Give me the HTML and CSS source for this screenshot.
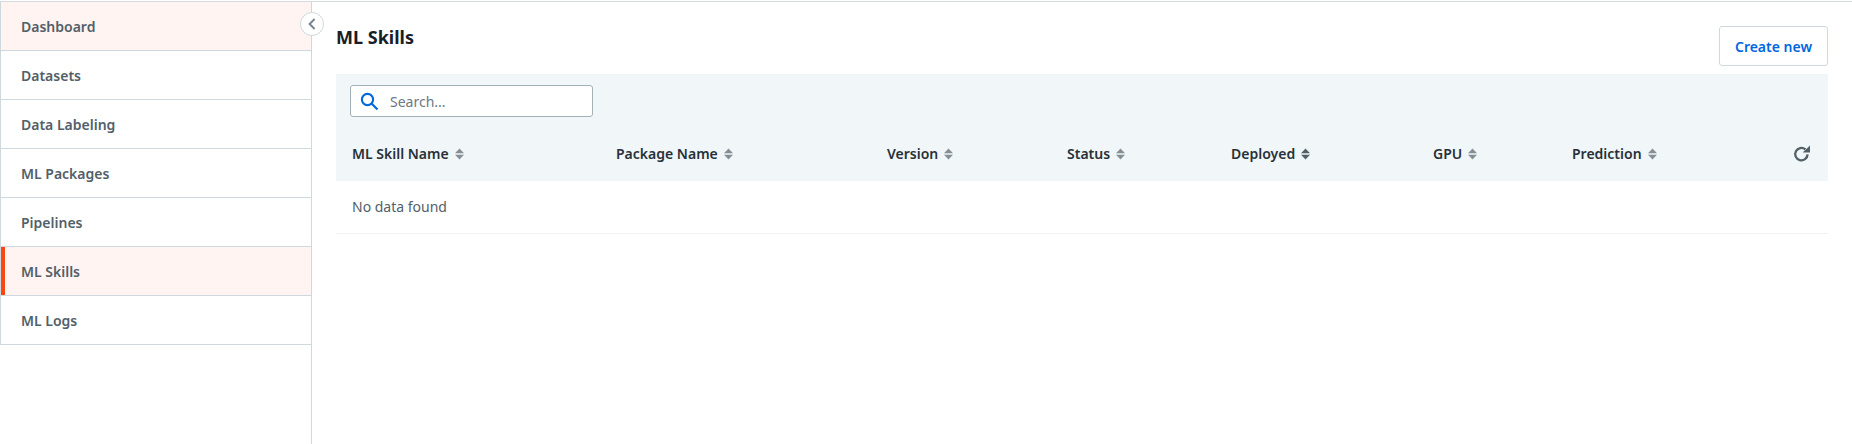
FILE: index.html
```html
<!DOCTYPE html>
<html lang="en">
<head>
<meta charset="utf-8">
<title>ML Skills</title>
<link rel="stylesheet" href="styles.css">
</head>
<body>
<div class="app">
  <aside class="sidebar">
    <nav class="nav">
      <a class="nav-item nav-hover">Dashboard</a>
      <a class="nav-item">Datasets</a>
      <a class="nav-item">Data Labeling</a>
      <a class="nav-item">ML Packages</a>
      <a class="nav-item">Pipelines</a>
      <a class="nav-item nav-active">ML Skills</a>
      <a class="nav-item">ML Logs</a>
    </nav>
    <button class="collapse" aria-label="Collapse">
      <svg width="14" height="14" viewBox="0 0 14 14"><path d="M9.6 2 4.6 7l5 5" fill="none" stroke="#7b8790" stroke-width="2"/></svg>
    </button>
  </aside>
  <main class="main">
    <header class="head">
      <h1 class="title">ML Skills</h1>
      <button class="create">Create new</button>
    </header>
    <section class="table">
      <div class="toolbar">
        <div class="search">
          <svg class="search-icon" width="19" height="19" viewBox="0 0 19 19"><circle cx="7.5" cy="7.5" r="5.6" fill="none" stroke="#0067df" stroke-width="2.1"/><path d="M11.5 11.5l6 6" stroke="#0067df" stroke-width="2.1" fill="none"/></svg>
          <span class="placeholder">Search...</span>
        </div>
      </div>
      <div class="thead">
        <div class="th w1">ML Skill Name<svg class="sort" width="9" height="12" viewBox="0 0 9 12"><path d="M4.5 .6 9 5.2H0zM4.5 11.4 0 6.8h9z" fill="#858f95"/></svg></div>
        <div class="th w2">Package Name<svg class="sort" width="9" height="12" viewBox="0 0 9 12"><path d="M4.5 .6 9 5.2H0zM4.5 11.4 0 6.8h9z" fill="#858f95"/></svg></div>
        <div class="th w3">Version<svg class="sort" width="9" height="12" viewBox="0 0 9 12"><path d="M4.5 .6 9 5.2H0zM4.5 11.4 0 6.8h9z" fill="#858f95"/></svg></div>
        <div class="th w4">Status<svg class="sort" width="9" height="12" viewBox="0 0 9 12"><path d="M4.5 .6 9 5.2H0zM4.5 11.4 0 6.8h9z" fill="#858f95"/></svg></div>
        <div class="th w5">Deployed<svg class="sort" width="9" height="12" viewBox="0 0 9 12"><path d="M4.5 .6 9 5.2H0zM4.5 11.4 0 6.8h9z" fill="#526069"/></svg></div>
        <div class="th w6">GPU<svg class="sort" width="9" height="12" viewBox="0 0 9 12"><path d="M4.5 .6 9 5.2H0zM4.5 11.4 0 6.8h9z" fill="#858f95"/></svg></div>
        <div class="th w7">Prediction<svg class="sort" width="9" height="12" viewBox="0 0 9 12"><path d="M4.5 .6 9 5.2H0zM4.5 11.4 0 6.8h9z" fill="#858f95"/></svg></div>
        <svg class="refresh" width="18" height="18" viewBox="0 0 18 18"><path d="M14.6 9.4A6.2 6.2 0 1 1 12.4 4.4" fill="none" stroke="#526069" stroke-width="2.3"/><path d="M9.6 7.6H17V.6z" fill="#526069"/></svg>
      </div>
      <div class="empty">No data found</div>
    </section>
  </main>
</div>
</body>
</html>
```
FILE: styles.css
```css
* { box-sizing: border-box; }
html, body { margin: 0; height: 100%; background: #fff; }
body { font-family: "Noto Sans", sans-serif; overflow: hidden; }
.app { display: flex; height: 444px; border-top: 1px solid #d5dbdf; margin-top: 1px; }
.sidebar { position: relative; flex: 0 0 312px; border-right: 1px solid #cfd8dd; }
.nav { display: flex; flex-direction: column; }
.nav-item {
  height: 49px; display: flex; align-items: center; padding-left: 20px;
  font-size: 14px; font-weight: 600; color: #526069;
  border-left: 1px solid #cfd8dd; border-bottom: 1px solid #cfd8dd;
}
.nav-hover { background: #fff4f1; }
.nav-active { background: #fff4f1; box-shadow: inset 4px 0 0 #fa4616; }
.collapse {
  position: absolute; top: 10px; right: -13px; width: 24px; height: 24px; padding: 0;
  display: flex; align-items: center; justify-content: center;
  border: 1px solid #cfd8dd; border-radius: 50%; background: #fff;
}
.main { flex: 1; padding: 0 24px; min-width: 0; }
.head { display: flex; justify-content: space-between; align-items: flex-start; height: 72px; }
.title { margin: 23px 0 0; font-size: 18px; line-height: 24px; font-weight: 700; color: #182027; }
.create {
  margin-top: 24px; width: 109px; height: 40px; background: #fff;
  border: 1px solid #cfd8dd; border-radius: 3px; color: #0067df;
  font: 600 14px "Noto Sans", sans-serif;
}
.table { display: flex; flex-direction: column; }
.toolbar { background: #f1f6f8; padding: 11px 14px 0; height: 54px; }
.search {
  display: flex; align-items: center; width: 243px; height: 32px; background: #fff;
  border: 1px solid #a4b1b8; border-radius: 3px; padding-left: 9px;
}
.search-icon { flex: none; }
.placeholder { margin-left: 11px; font-size: 14px; color: #6b7882; }
.thead { display: flex; align-items: center; height: 53px; background: #f1f6f8; padding: 0 17px 2px 16px; font-size: 14px; font-weight: 600; color: #273139; }
.th { display: flex; align-items: center; flex: none; }
.sort { margin-left: 6px; }
.w1 { width: 264px; }
.w2 { width: 271px; }
.w3 { width: 180px; }
.w4 { width: 164px; }
.w5 { width: 202px; }
.w6 { width: 139px; }
.w7 { width: 138px; }
.refresh { margin-left: auto; }
.empty { height: 53px; display: flex; align-items: center; padding: 0 0 2px 16px; font-size: 14px; color: #526069; border-bottom: 1px solid #f1f2f3; }
```
